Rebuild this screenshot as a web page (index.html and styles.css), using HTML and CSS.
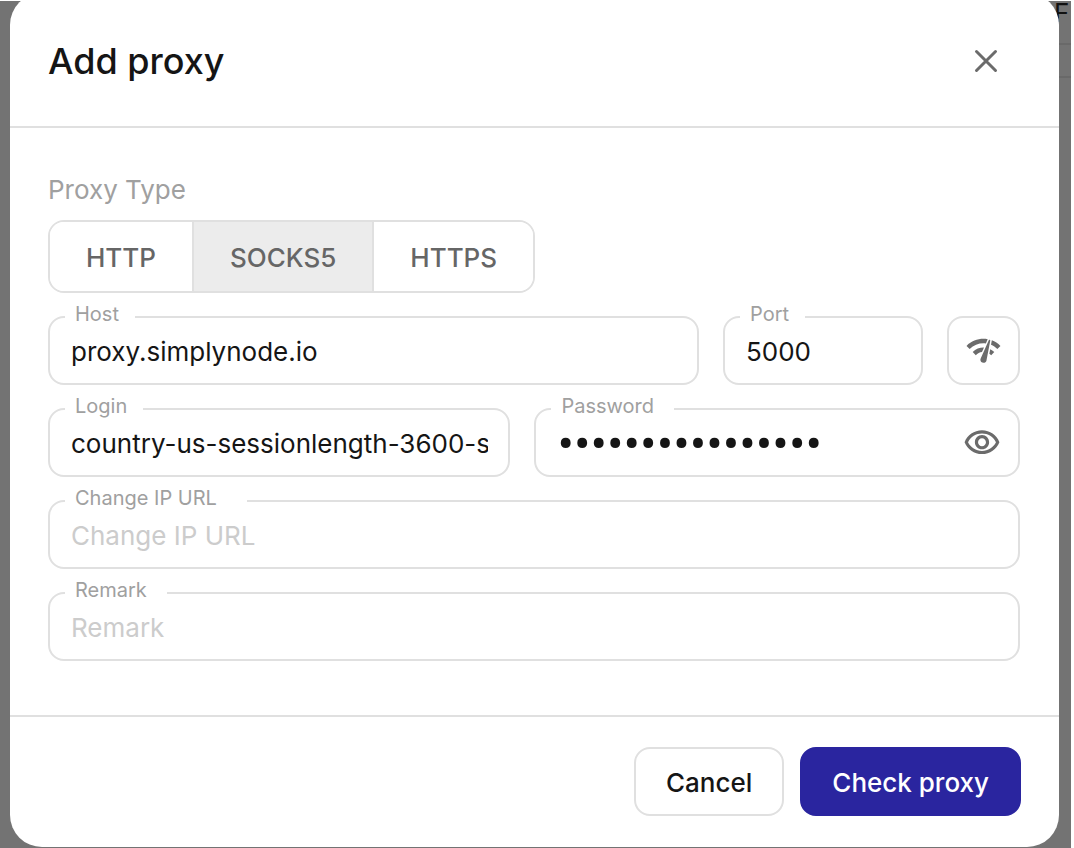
FILE: index.html
```html
<!DOCTYPE html>
<html lang="en">
<head>
    <meta charset="UTF-8">
    <meta name="viewport" content="width=device-width, initial-scale=1.0">
    <title>Add proxy</title>
    <link rel="stylesheet" href="styles.css">
</head>
<body>
    <div class="backdrop">
        <!-- Page behind the dialog -->
        <div class="page-behind">
            <span class="page-letter">F</span>
            <div class="page-row"></div>
        </div>

        <!-- Dialog -->
        <form class="dialog" role="dialog" aria-labelledby="dialog-title">
            <div class="dialog-header">
                <h1 id="dialog-title">Add proxy</h1>
                <button type="button" class="icon-button" aria-label="Close">
                    <svg width="24" height="24" viewBox="0 0 24 24" fill="none" stroke="currentColor" stroke-width="3" stroke-linecap="round"><path d="M2.5 2.5l19 19M21.5 2.5l-19 19"/></svg>
                </button>
            </div>

            <div class="dialog-body">
                <div class="group-label" id="type-label">Proxy Type</div>
                <div class="toggle-group" role="group" aria-labelledby="type-label">
                    <button type="button" aria-pressed="false">HTTP</button>
                    <button type="button" class="selected" aria-pressed="true">SOCKS5</button>
                    <button type="button" aria-pressed="false">HTTPS</button>
                </div>

                <div class="row row-host">
                    <div class="field">
                        <label for="host">Host</label>
                        <input type="text" id="host" name="host" value="proxy.simplynode.io">
                    </div>
                    <div class="field">
                        <label for="port">Port</label>
                        <input type="text" id="port" name="port" value="5000">
                    </div>
                    <button type="button" class="check-button" aria-label="Check connection">
                        <svg width="37" height="37" viewBox="0 0 24 24" fill="currentColor"><path d="M15.9 5c-.17 0-.32.09-.41.23l-.07.15-5.18 11.65c-.16.29-.26.61-.26.96 0 1.11.9 2.01 2.01 2.01.96 0 1.77-.68 1.96-1.59l.01-.03L16.4 5.5c0-.28-.22-.5-.5-.5zM1 9l2 2c2.88-2.88 6.79-4.08 10.53-3.62l1.19-2.68C9.89 3.84 4.74 5.27 1 9zm20 2l2-2c-1.64-1.64-3.55-2.82-5.59-3.57l-.53 2.82c1.5.62 2.9 1.53 4.12 2.75zm-4 4l2-2c-.8-.8-1.7-1.42-2.66-1.89l-.55 2.92c.42.27.83.59 1.21.97zM5 13l2 2c1.13-1.13 2.56-1.79 4.03-2l1.28-2.88c-2.63-.08-5.3.87-7.31 2.88z"/></svg>
                    </button>
                </div>

                <div class="row row-login">
                    <div class="field">
                        <label for="login">Login</label>
                        <input type="text" id="login" name="login" value="country-us-sessionlength-3600-session">
                    </div>
                    <div class="field field-password">
                        <label for="password" class="notch-medium">Password</label>
                        <input type="password" id="password" name="password" value="abcdefgh12345678">
                        <button type="button" class="icon-button" aria-label="Show password">
                            <svg width="38" height="38" viewBox="0 0 24 24" fill="currentColor"><path d="M12 6c3.79 0 7.17 2.13 8.82 5.5C19.17 14.87 15.79 17 12 17s-7.17-2.13-8.82-5.5C4.83 8.13 8.21 6 12 6m0-2C7 4 2.73 7.11 1 11.5 2.73 15.89 7 19 12 19s9.27-3.11 11-7.5C21.27 7.11 17 4 12 4zm0 5c1.38 0 2.5 1.12 2.5 2.5S13.38 14 12 14s-2.5-1.12-2.5-2.5S10.62 9 12 9m0-2c-2.48 0-4.5 2.02-4.5 4.5S9.52 16 12 16s4.5-2.02 4.5-4.5S14.48 7 12 7z"/></svg>
                        </button>
                    </div>
                </div>

                <div class="row">
                    <div class="field">
                        <label for="change-url" class="notch-wide">Change IP URL</label>
                        <input type="text" id="change-url" name="change_url" placeholder="Change IP URL">
                    </div>
                </div>

                <div class="row">
                    <div class="field">
                        <label for="remark" class="notch-medium">Remark</label>
                        <input type="text" id="remark" name="remark" placeholder="Remark">
                    </div>
                </div>
            </div>

            <div class="dialog-footer">
                <button type="button" class="btn">Cancel</button>
                <button type="submit" class="btn btn-primary">Check proxy</button>
            </div>
        </form>
    </div>
</body>
</html>
```
FILE: styles.css
```css
/* General Styles */
* {
    box-sizing: border-box;
}

body {
    margin: 0;
    background-color: #ffffff;
    font-family: Inter, "Liberation Sans", sans-serif;
    font-size: 26px;
    color: #151515;
}

button,
input {
    font: inherit;
    color: inherit;
}

button {
    cursor: pointer;
}

svg {
    display: block;
}

/* Backdrop */
.backdrop {
    position: relative;
    overflow: hidden;
    margin: 1px 3px 0 0;
    background-color: #737373;
}

.page-behind {
    position: absolute;
    top: 0;
    right: 0;
    width: 17px;
}

.page-letter {
    display: block;
    line-height: 24px;
    color: #111111;
}

.page-row {
    height: 35px;
    margin-top: 18px;
    border: solid #696969;
    border-width: 2px 0;
}

/* Dialog */
.dialog {
    position: relative;
    margin: -8px 12px 1px 10px;
    border-radius: 32px;
    background-color: #ffffff;
}

.dialog-header {
    display: flex;
    justify-content: space-between;
    align-items: center;
    padding: 46px 61px 43px 38px;
    border-bottom: 2px solid #e0e0e0;
}

.dialog-header h1 {
    margin: 0;
    font-size: 36px;
    line-height: 44px;
    font-weight: 500;
}

.icon-button {
    padding: 0;
    border: none;
    background: none;
    color: #6b6b6b;
}

.dialog-body {
    padding: 46px 39px 54px 38px;
}

/* Proxy type */
.group-label {
    margin-bottom: 14px;
    line-height: 32px;
    color: #a0a0a0;
}

.toggle-group {
    display: inline-flex;
    height: 73px;
    overflow: hidden;
    border: 2px solid #e0e0e0;
    border-radius: 16px;
    vertical-align: top;
}

.toggle-group button {
    padding: 2px 36px 0;
    border: none;
    background-color: #ffffff;
    font-weight: 500;
    color: #666666;
}

.toggle-group button + button {
    border-left: 2px solid #e0e0e0;
}

.toggle-group .selected {
    background-color: #ececec;
}

/* Fields */
.row {
    display: grid;
    gap: 24px;
    margin-top: 23px;
}

.row-host {
    grid-template-columns: 1fr 200px 73px;
}

.row-login {
    grid-template-columns: 20fr 21fr;
}

.field {
    position: relative;
    display: flex;
    align-items: center;
    min-width: 0;
    height: 69px;
    padding: 0 20px 0 21px;
    border: 2px solid #e0e0e0;
    border-radius: 16px;
}

.field-password {
    padding-right: 17px;
}

/* The label sits on the top border and hides the part under it */
.field label {
    position: absolute;
    top: -16px;
    left: 15px;
    padding: 0 16px 0 10px;
    background-color: #ffffff;
    font-size: 20px;
    line-height: 24px;
    color: #a0a0a0;
}

.field .notch-medium {
    padding-right: 20px;
}

.field .notch-wide {
    padding-right: 30px;
}

.field input {
    flex: 1;
    min-width: 0;
    padding: 2px 0 0;
    border: none;
    outline: none;
    background: none;
    line-height: 32px;
}

/* Bigger bullets */
.field input[type="password"] {
    padding: 4px 0 0;
    font-family: Roboto, sans-serif;
    font-size: 49px;
}

.field input::placeholder {
    color: #cccccc;
    opacity: 1;
}

.check-button {
    display: flex;
    justify-content: center;
    align-items: center;
    padding: 0;
    border: 2px solid #e0e0e0;
    border-radius: 16px;
    background-color: #ffffff;
    color: #6b6b6b;
}

/* Footer */
.dialog-footer {
    display: flex;
    justify-content: flex-end;
    gap: 16px;
    padding: 30px 38px 31px;
    border-top: 2px solid #e0e0e0;
}

.btn {
    height: 69px;
    padding: 2px 30px 0;
    border: 2px solid #e0e0e0;
    border-radius: 16px;
    background-color: #ffffff;
    font-weight: 500;
}

.btn-primary {
    border-color: #2a259f;
    background-color: #2a259f;
    color: #ffffff;
}
```
